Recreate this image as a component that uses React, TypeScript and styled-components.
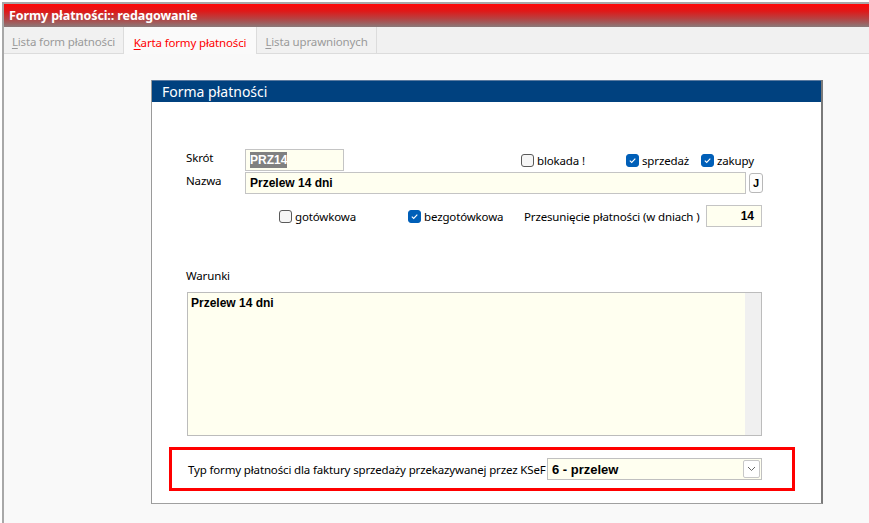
import React from "react";
import styled, { createGlobalStyle } from "styled-components";

const Global = createGlobalStyle`
  html, body { margin: 0; padding: 0; background: #ffffff; }
  body { font-family: "Noto Sans", "Open Sans", sans-serif; font-size: 11.5px; letter-spacing: -0.15px; color: #000; }
  #root { width: 869px; height: 523px; overflow: hidden; }
`;

const Root = styled.div`
  width: 869px;
  height: 523px;
  padding: 2px 0 0 2px;
  box-sizing: border-box;
  display: flex;
`;

const Window = styled.div`
  flex: 1;
  display: flex;
  flex-direction: column;
  border-top: 2px solid #a8a8a8;
  border-left: 2px solid #a8a8a8;
  background: #f9f9f9;
`;

const TitleBar = styled.div`
  height: 23px;
  display: flex;
  align-items: center;
  padding-left: 5px;
  background: linear-gradient(#ff0808 0%, #e01818 30%, #b44444 65%, #8a7a7a 100%);
  color: #ffffff;
  font-family: "Noto Sans", "Open Sans", sans-serif;
  font-weight: 700;
  font-size: 12.5px;
  letter-spacing: -0.1px;
`;

const TabBar = styled.div`
  height: 27px;
  display: flex;
  background: #f1f1f1;
  border-bottom: 1px solid #dcdcdc;
  box-sizing: border-box;
`;

const Tab = styled.div<{ $active?: boolean; $w: number }>`
  width: ${(p) => p.$w}px;
  box-sizing: border-box;
  display: flex;
  align-items: center;
  justify-content: center;
  padding-top: 3px;
  font-size: 11.5px;
  color: ${(p) => (p.$active ? "#ff0000" : "#9a9a9a")};
  background: ${(p) => (p.$active ? "#fafafa" : "#f1f1f1")};
  border-right: 1px solid #dcdcdc;
  margin-bottom: ${(p) => (p.$active ? "-1px" : "0")};
  u { text-decoration: underline; text-underline-offset: 2px; }
`;

const Content = styled.div`
  flex: 1;
  padding: 26px 0 0 147px;
`;

const Panel = styled.div`
  width: 672px;
  height: 424px;
  box-sizing: border-box;
  background: #ffffff;
  border-left: 1px solid #9a9a9a;
  border-right: 2px solid #7a7a7a;
  border-bottom: 1px solid #a0a0a0;
  display: flex;
  flex-direction: column;
`;

const PanelHeader = styled.div`
  height: 21px;
  background: #00417f;
  color: #ffffff;
  font-size: 14px;
  letter-spacing: 0;
  display: flex;
  align-items: center;
  padding-left: 10px;
  border-top: 1px solid #5a7aa0;
`;

const PanelBody = styled.div`
  padding: 47px 0 0 34px;
  display: flex;
  flex-direction: column;
`;

const Row = styled.div<{ $mt?: number; $h?: number }>`
  display: flex;
  align-items: center;
  height: ${(p) => p.$h ?? 22}px;
  margin-top: ${(p) => p.$mt ?? 0}px;
`;

const Label = styled.div<{ $w?: number }>`
  width: ${(p) => (p.$w ? `${p.$w}px` : "auto")};
  flex-shrink: 0;
  align-self: flex-start;
  padding-top: 1px;
  white-space: nowrap;
`;

const InlineLabel = styled.div<{ $w?: number }>`
  width: ${(p) => (p.$w ? `${p.$w}px` : "auto")};
  flex-shrink: 0;
  white-space: nowrap;
`;

const Spacer = styled.div<{ $w: number }>`
  width: ${(p) => p.$w}px;
  flex-shrink: 0;
`;

const Input = styled.div<{ $w: number; $right?: boolean }>`
  width: ${(p) => p.$w}px;
  flex-shrink: 0;
  height: 22px;
  box-sizing: border-box;
  border: 1px solid #c4c4c4;
  background: #fffff0;
  display: flex;
  align-items: center;
  justify-content: ${(p) => (p.$right ? "flex-end" : "flex-start")};
  padding: 0 ${(p) => (p.$right ? "7px" : "4px")};
  font-family: "Liberation Sans", Arial, sans-serif;
  font-weight: 700;
  font-size: 12px;
  letter-spacing: 0;
`;

const Selected = styled.span`
  background: #808080;
  color: #ffffff;
  padding: 1px 0;
`;

const JButton = styled.div`
  width: 14px;
  height: 20px;
  margin-left: 3px;
  box-sizing: border-box;
  border: 1px solid #b8b8b8;
  border-radius: 3px;
  background: #fdfdfd;
  display: flex;
  align-items: center;
  justify-content: center;
  font-family: "Liberation Sans", Arial, sans-serif;
  font-weight: 700;
  font-size: 11px;
`;

const CheckWrap = styled.div<{ $w?: number }>`
  display: flex;
  align-items: center;
  width: ${(p) => (p.$w ? `${p.$w}px` : "auto")};
  flex-shrink: 0;
  white-space: nowrap;
  gap: 3px;
`;

const Box = styled.div<{ $on?: boolean }>`
  width: 13px;
  height: 13px;
  flex-shrink: 0;
  box-sizing: border-box;
  border-radius: 3px;
  border: 1px solid ${(p) => (p.$on ? "#005fb8" : "#5a5a5a")};
  background: ${(p) => (p.$on ? "#005fb8" : "#f6f6f6")};
  display: flex;
  align-items: center;
  justify-content: center;
`;

const Check = ({ on, label, w }: { on?: boolean; label: string; w?: number }) => (
  <CheckWrap $w={w}>
    <Box $on={on}>
      {on && (
        <svg width="9" height="9" viewBox="0 0 9 9">
          <path d="M1.8 4.6 L3.7 6.4 L7.3 2.6" fill="none" stroke="#ffffff" strokeWidth="1.1" />
        </svg>
      )}
    </Box>
    <span>{label}</span>
  </CheckWrap>
);

const TextArea = styled.div`
  margin-top: 7px;
  margin-left: 1px;
  width: 575px;
  height: 144px;
  box-sizing: border-box;
  border: 1px solid #bcbcbc;
  background: #fffff0;
  display: flex;
`;

const TextAreaText = styled.div`
  flex: 1;
  padding: 3px 3px;
  font-family: "Liberation Sans", Arial, sans-serif;
  font-weight: 700;
  font-size: 12px;
  letter-spacing: 0;
`;

const ScrollTrack = styled.div`
  width: 16px;
  background: #f0f0f0;
`;

const KsefBox = styled.div`
  margin-top: 11px;
  margin-left: -17px;
  width: 626px;
  height: 44px;
  box-sizing: border-box;
  border: 3px solid #ff0000;
  display: flex;
  align-items: center;
  padding-left: 16px;
`;

const Select = styled.div`
  width: 215px;
  height: 22px;
  flex-shrink: 0;
  box-sizing: border-box;
  border: 1px solid #c0c0c0;
  background: #fffff0;
  display: flex;
  align-items: center;
  padding-left: 4px;
  font-family: "Liberation Sans", Arial, sans-serif;
  font-weight: 700;
  font-size: 13px;
  letter-spacing: 0;
`;

const SelectValue = styled.div`
  flex: 1;
`;

const DropBtn = styled.div`
  width: 17px;
  height: 18px;
  margin-right: 1px;
  box-sizing: border-box;
  border: 1px solid #c8c8c8;
  border-radius: 2px;
  background: #ffffff;
  display: flex;
  align-items: center;
  justify-content: center;
`;

export default function App() {
  return (
    <>
      <Global />
      <Root>
        <Window>
          <TitleBar>Formy płatności:: redagowanie</TitleBar>
          <TabBar>
            <Tab $w={120}>
              <span><u>L</u>ista form płatności</span>
            </Tab>
            <Tab $w={133} $active>
              <span><u>K</u>arta formy płatności</span>
            </Tab>
            <Tab $w={120}>
              <span><u>L</u>ista uprawnionych</span>
            </Tab>
          </TabBar>
          <Content>
            <Panel>
              <PanelHeader>Forma płatności</PanelHeader>
              <PanelBody>
                <Row>
                  <Label $w={59}>Skrót</Label>
                  <Input $w={99}>
                    <Selected>PRZ14</Selected>
                  </Input>
                  <Spacer $w={177} />
                  <Check label="blokada !" w={105} />
                  <Check on label="sprzedaż" w={75} />
                  <Check on label="zakupy" />
                </Row>
                <Row $mt={1}>
                  <Label $w={59}>Nazwa</Label>
                  <Input $w={501}>Przelew 14 dni</Input>
                  <JButton>J</JButton>
                </Row>
                <Row $mt={11}>
                  <Spacer $w={93} />
                  <Check label="gotówkowa" w={129} />
                  <Check on label="bezgotówkowa" w={116} />
                  <InlineLabel $w={182}>Przesunięcie płatności (w dniach )</InlineLabel>
                  <Input $w={56} $right>14</Input>
                </Row>
                <Row $mt={40} $h={18}>
                  <Label>Warunki</Label>
                </Row>
                <TextArea>
                  <TextAreaText>Przelew 14 dni</TextAreaText>
                  <ScrollTrack />
                </TextArea>
                <KsefBox>
                  <InlineLabel $w={359}>Typ formy płatności dla faktury sprzedaży przekazywanej przez KSeF</InlineLabel>
                  <Select>
                    <SelectValue>6 - przelew</SelectValue>
                    <DropBtn>
                      <svg width="9" height="6" viewBox="0 0 9 6">
                        <path d="M1 1 L4.5 4.5 L8 1" fill="none" stroke="#666" strokeWidth="1" />
                      </svg>
                    </DropBtn>
                  </Select>
                </KsefBox>
              </PanelBody>
            </Panel>
          </Content>
        </Window>
      </Root>
    </>
  );
}
